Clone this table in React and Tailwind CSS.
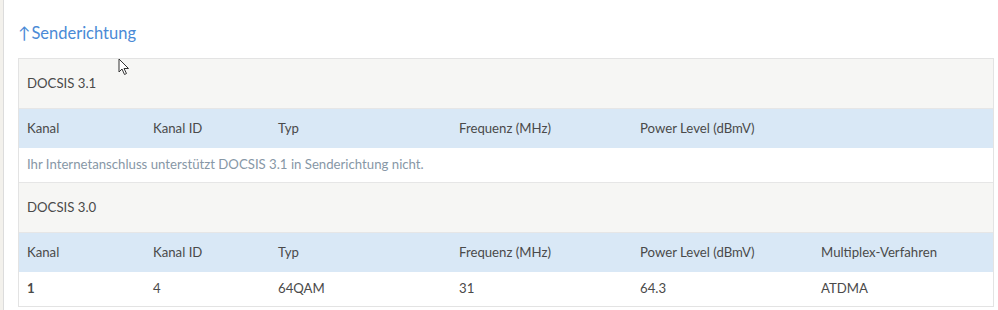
import React from "react";

const cols = "grid grid-cols-[126px_125px_181px_181px_181px_1fr]";

const header = ["Kanal", "Kanal ID", "Typ", "Frequenz (MHz)", "Power Level (dBmV)"];

function HeadRow({ items }) {
  return (
    <div className={`${cols} h-[39px] items-center bg-[#d9e8f6] px-2 text-[13.2px] text-[#4a4a4a]`}>
      {items.map((h) => (
        <div key={h}>{h}</div>
      ))}
    </div>
  );
}

function Section({ title }) {
  return (
    <div className="flex h-[50px] items-center border-b border-[#e6e6e6] bg-[#f6f6f4] px-2 text-[13.2px] text-[#4a4a4a]">
      {title}
    </div>
  );
}

export default function App() {
  return (
    <div
      className="relative flex h-[310px] w-[998px] bg-white"
      style={{ fontFamily: "Lato, 'Noto Sans', sans-serif" }}
    >
      <div className="w-[3px] bg-[#f3f1ec]" />
      <div className="w-px bg-[#dcdcdc]" />
      <div className="flex-1 pl-[14px] pr-[4px]">
        <h2 className="mt-[22px] flex h-[22px] items-center text-[16.5px] text-[#4a8ad6]">
          <span className="mr-[1px]">↑</span>Senderichtung
        </h2>
        <div className="mt-[14px] border border-[#e3e3e3]">
          <Section title="DOCSIS 3.1" />
          <HeadRow items={header} />
          <div className="flex h-[35px] items-center border-b border-[#e6e6e6] px-2 text-[13.2px] text-[#8797a6]">
            Ihr Internetanschluss unterstützt DOCSIS 3.1 in Senderichtung nicht.
          </div>
          <Section title="DOCSIS 3.0" />
          <HeadRow items={[...header, "Multiplex-Verfahren"]} />
          <div className={`${cols} h-[34px] items-center px-2 text-[13.2px] text-[#4a4a4a]`}>
            <div className="font-bold">1</div>
            <div>4</div>
            <div>64QAM</div>
            <div>31</div>
            <div>64.3</div>
            <div>ATDMA</div>
          </div>
        </div>
      </div>
      <svg className="absolute left-[118px] top-[58px]" width="13" height="18" viewBox="0 0 13 18">
        <path d="M1 1 L1 14 L4 11 L6.5 16.5 L8.5 15.5 L6 10.5 L10.5 10.5 Z" fill="white" stroke="#333" strokeWidth="1" strokeLinejoin="round" />
      </svg>
    </div>
  );
}
